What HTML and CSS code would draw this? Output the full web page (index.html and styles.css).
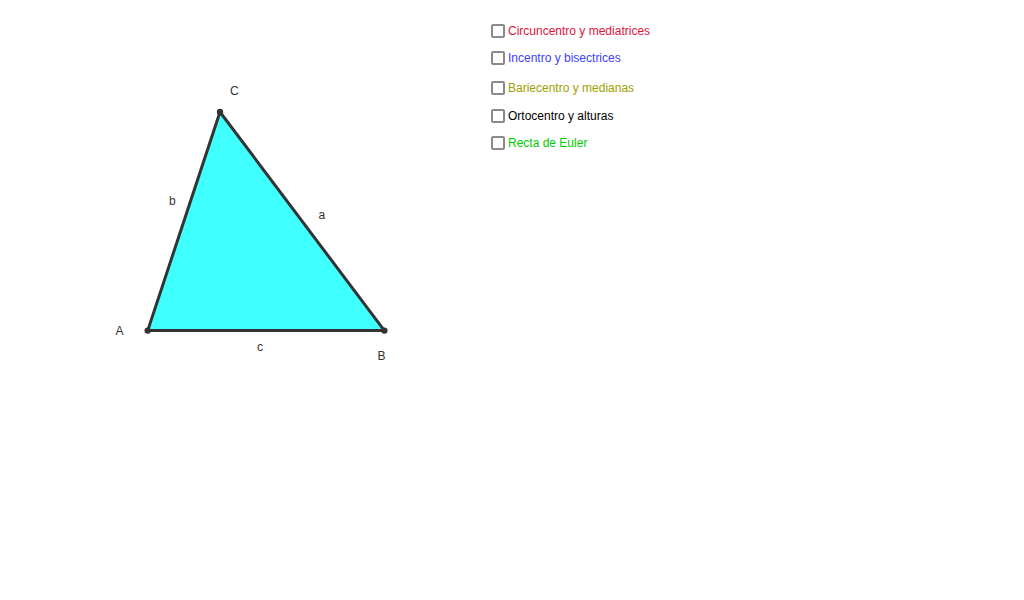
FILE: index.html
```html
<!DOCTYPE html>
<html>
<head>
<meta charset="utf-8">
<link rel="stylesheet" href="styles.css">
</head>
<body>
<div class="page">
  <svg class="canvas" width="1024" height="600" viewBox="0 0 1024 600">
    <polygon points="147.7,330.6 384.4,330.6 220,112" class="tri"/>
    <circle cx="147.7" cy="330.6" r="3.2" class="pt"/>
    <circle cx="384.4" cy="330.6" r="3.2" class="pt"/>
    <circle cx="220" cy="112" r="3.2" class="pt"/>
    <text x="230" y="94.5" class="lbl">C</text>
    <text x="169" y="205" class="lbl">b</text>
    <text x="318.5" y="219" class="lbl">a</text>
    <text x="115.5" y="334.5" class="lbl">A</text>
    <text x="257" y="351" class="lbl">c</text>
    <text x="377.5" y="359.5" class="lbl">B</text>
  </svg>
  <div class="panel">
    <label class="row r1"><span class="box"></span><span class="txt red">Circuncentro y mediatrices</span></label>
    <label class="row r2"><span class="box"></span><span class="txt blue">Incentro y bisectrices</span></label>
    <label class="row r3"><span class="box"></span><span class="txt olive">Bariecentro y medianas</span></label>
    <label class="row r4"><span class="box"></span><span class="txt black">Ortocentro y alturas</span></label>
    <label class="row r5"><span class="box"></span><span class="txt green">Recta de Euler</span></label>
  </div>
</div>
</body>
</html>
```
FILE: styles.css
```css
html, body {
  margin: 0;
  padding: 0;
  background: #fff;
}
.page {
  position: relative;
  width: 1024px;
  height: 600px;
  overflow: hidden;
  font-family: "Liberation Sans", Arial, sans-serif;
}
.canvas {
  position: absolute;
  left: 0;
  top: 0;
}
.tri {
  fill: #40ffff;
  stroke: #333333;
  stroke-width: 3;
  stroke-linejoin: round;
}
.pt {
  fill: #333333;
}
.lbl {
  font-family: "Liberation Sans", Arial, sans-serif;
  font-size: 12px;
  fill: #333333;
}
.panel {
  position: relative;
  display: flex;
  flex-direction: column;
  padding-left: 490.5px;
  padding-top: 24px;
}
.row {
  display: flex;
  align-items: center;
  height: 14px;
  font-size: 12px;
}
.r2 { margin-top: 13px; }
.r3 { margin-top: 16px; }
.r4 { margin-top: 14px; }
.r5 { margin-top: 13px; }
.box {
  width: 10px;
  height: 10px;
  border: 2px solid #8a8a8a;
  border-radius: 2px;
  background: #fff;
  flex: none;
}
.txt {
  margin-left: 3.5px;
  white-space: nowrap;
}
.red { color: #dc143c; }
.blue { color: #4040ff; }
.olive { color: #a0a000; }
.black { color: #000; }
.green { color: #00cc00; }
```
